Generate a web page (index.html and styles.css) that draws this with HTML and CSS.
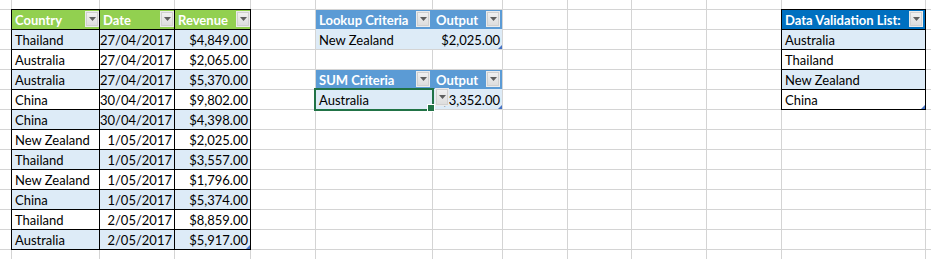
FILE: index.html
```html
<!DOCTYPE html>
<html lang="en">
<head>
<meta charset="utf-8">
<title>Sheet</title>
<link rel="stylesheet" href="styles.css">
</head>
<body>
<div class="sheet">
  <div class="tbl t-data">
    <div class="c hd green">Country<span class="dd"><svg width="7" height="4" viewBox="0 0 7 4"><path d="M0 0h7L3.5 4z"/></svg></span></div>
    <div class="c hd green">Date<span class="dd"><svg width="7" height="4" viewBox="0 0 7 4"><path d="M0 0h7L3.5 4z"/></svg></span></div>
    <div class="c hd green">Revenue<span class="dd"><svg width="7" height="4" viewBox="0 0 7 4"><path d="M0 0h7L3.5 4z"/></svg></span></div>

    <div class="c alt">Thailand</div><div class="c alt r">27/04/2017</div><div class="c alt r">$4,849.00</div>
    <div class="c">Australia</div><div class="c r">27/04/2017</div><div class="c r">$2,065.00</div>
    <div class="c alt">Australia</div><div class="c alt r">27/04/2017</div><div class="c alt r">$5,370.00</div>
    <div class="c">China</div><div class="c r">30/04/2017</div><div class="c r">$9,802.00</div>
    <div class="c alt">China</div><div class="c alt r">30/04/2017</div><div class="c alt r">$4,398.00</div>
    <div class="c">New Zealand</div><div class="c r">1/05/2017</div><div class="c r">$2,025.00</div>
    <div class="c alt">Thailand</div><div class="c alt r">1/05/2017</div><div class="c alt r">$3,557.00</div>
    <div class="c">New Zealand</div><div class="c r">1/05/2017</div><div class="c r">$1,796.00</div>
    <div class="c alt">China</div><div class="c alt r">1/05/2017</div><div class="c alt r">$5,374.00</div>
    <div class="c">Thailand</div><div class="c r">2/05/2017</div><div class="c r">$8,859.00</div>
    <div class="c alt">Australia</div><div class="c alt r">2/05/2017</div><div class="c alt r corner">$5,917.00</div>
  </div>

  <div class="tbl t-look">
    <div class="c hd blue first">Lookup Criteria<span class="dd"><svg width="7" height="4" viewBox="0 0 7 4"><path d="M0 0h7L3.5 4z"/></svg></span></div>
    <div class="c hd blue">Output<span class="dd"><svg width="7" height="4" viewBox="0 0 7 4"><path d="M0 0h7L3.5 4z"/></svg></span></div>
    <div class="c alt">New Zealand</div><div class="c alt r corner">$2,025.00</div>
  </div>

  <div class="tbl t-sum">
    <div class="c hd blue first">SUM Criteria<span class="dd"><svg width="7" height="4" viewBox="0 0 7 4"><path d="M0 0h7L3.5 4z"/></svg></span></div>
    <div class="c hd blue">Output<span class="dd"><svg width="7" height="4" viewBox="0 0 7 4"><path d="M0 0h7L3.5 4z"/></svg></span></div>
    <div class="c alt sel">Australia<span class="dd vdd"><svg width="7" height="4" viewBox="0 0 7 4"><path d="M0 0h7L3.5 4z"/></svg></span></div><div class="c alt r corner">$3,352.00</div>
  </div>

  <div class="tbl t-dv">
    <div class="c hd navy">Data Validation List:<span class="dd"><svg width="7" height="4" viewBox="0 0 7 4"><path d="M0 0h7L3.5 4z"/></svg></span></div>
    <div class="c alt">Australia</div>
    <div class="c">Thailand</div>
    <div class="c alt">New Zealand</div>
    <div class="c corner">China</div>
  </div>
</div>
</body>
</html>
```

FILE: styles.css
```css
* { box-sizing: border-box; }

body {
  margin: 0;
  background: #fff;
  color: #000;
  font-family: Lato, "Liberation Sans", sans-serif;
  font-size: 13px;
}

.sheet {
  width: 931px;
  height: 259px;
  overflow: hidden;
  display: grid;
  grid-template-columns: 11px 87px 74px 75px 64px 116px 69px 64px 63px 74px 74px 143px 1fr;
  grid-template-rows: 9px repeat(12, 19px) 1fr;
  gap: 1px;
  background-color: #fff;
  background-image:
    linear-gradient(#d4d4d4, #d4d4d4),
    linear-gradient(#d4d4d4, #d4d4d4),
    linear-gradient(#d4d4d4, #d4d4d4),
    linear-gradient(#d4d4d4, #d4d4d4),
    linear-gradient(#d4d4d4, #d4d4d4),
    linear-gradient(#d4d4d4, #d4d4d4),
    linear-gradient(#d4d4d4, #d4d4d4),
    linear-gradient(#d4d4d4, #d4d4d4),
    linear-gradient(#d4d4d4, #d4d4d4),
    linear-gradient(#d4d4d4, #d4d4d4),
    linear-gradient(#d4d4d4, #d4d4d4),
    linear-gradient(#d4d4d4, #d4d4d4),
    linear-gradient(to bottom, #d4d4d4 1px, transparent 1px);
  background-size:
    1px 100%, 1px 100%, 1px 100%, 1px 100%, 1px 100%, 1px 100%,
    1px 100%, 1px 100%, 1px 100%, 1px 100%, 1px 100%, 1px 100%,
    100% 20px;
  background-position:
    11px 0, 99px 0, 174px 0, 250px 0, 315px 0, 432px 0,
    502px 0, 567px 0, 631px 0, 706px 0, 781px 0, 925px 0,
    0 9px;
  background-repeat:
    no-repeat, no-repeat, no-repeat, no-repeat, no-repeat, no-repeat,
    no-repeat, no-repeat, no-repeat, no-repeat, no-repeat, no-repeat,
    repeat-y;
}

.tbl {
  display: grid;
  gap: 1px;
  grid-auto-rows: 19px;
}

.t-data {
  grid-column: 2 / 5;
  grid-row: 2 / 14;
  grid-template-columns: 87px 74px 75px;
  background: #000;
  outline: 1px solid #000;
}

.t-look {
  grid-column: 6 / 8;
  grid-row: 2 / 4;
  grid-template-columns: 116px 69px;
  background: #ddebf7;
}

.t-sum {
  grid-column: 6 / 8;
  grid-row: 5 / 7;
  grid-template-columns: 116px 69px;
  background: #ddebf7;
}

.t-dv {
  grid-column: 12 / 13;
  grid-row: 2 / 7;
  grid-template-columns: 143px;
  background: #000;
  outline: 1px solid #000;
}

.c {
  position: relative;
  display: flex;
  align-items: flex-end;
  padding: 0 2px 1px 3px;
  line-height: 16px;
  white-space: nowrap;
  overflow: hidden;
  background: #fff;
}

.alt { background: #ddebf7; }
.r { justify-content: flex-end; }

.hd {
  color: #fff;
  font-weight: 700;
  padding-right: 0;
}

.green { background: #92d050; }
.blue { background: #5b9bd5; }
.blue.first { box-shadow: 1px 0 0 #5b9bd5; }
.navy { background: #0070c0; }

.dd {
  flex: none;
  display: flex;
  align-items: center;
  justify-content: center;
  width: 14px;
  height: 16px;
  margin-left: auto;
  margin-right: 0;
  align-self: center;
  background: linear-gradient(#f2f2f2, #dcdcdc);
  border: 1px solid #ebebeb;
  box-shadow: inset 0 0 0 1px #d0d0d0;
}

.blue .dd, .navy .dd { margin-right: 2px; }

.dd svg { display: block; fill: #5f5f5f; }

.corner::after {
  content: "";
  position: absolute;
  right: 0;
  bottom: 0;
  width: 0;
  height: 0;
  border-left: 4px solid transparent;
  border-bottom: 4px solid #4472c4;
}

.sel {
  overflow: visible;
  outline: 2px solid #217346;
  z-index: 1;
}

.sel::after {
  content: "";
  position: absolute;
  right: -3px;
  bottom: -3px;
  width: 6px;
  height: 6px;
  background: #217346;
  border: 1px solid #fff;
}

.vdd {
  position: absolute;
  left: 119px;
  top: -2px;
  height: 18px;
  margin: 0;
}
```
